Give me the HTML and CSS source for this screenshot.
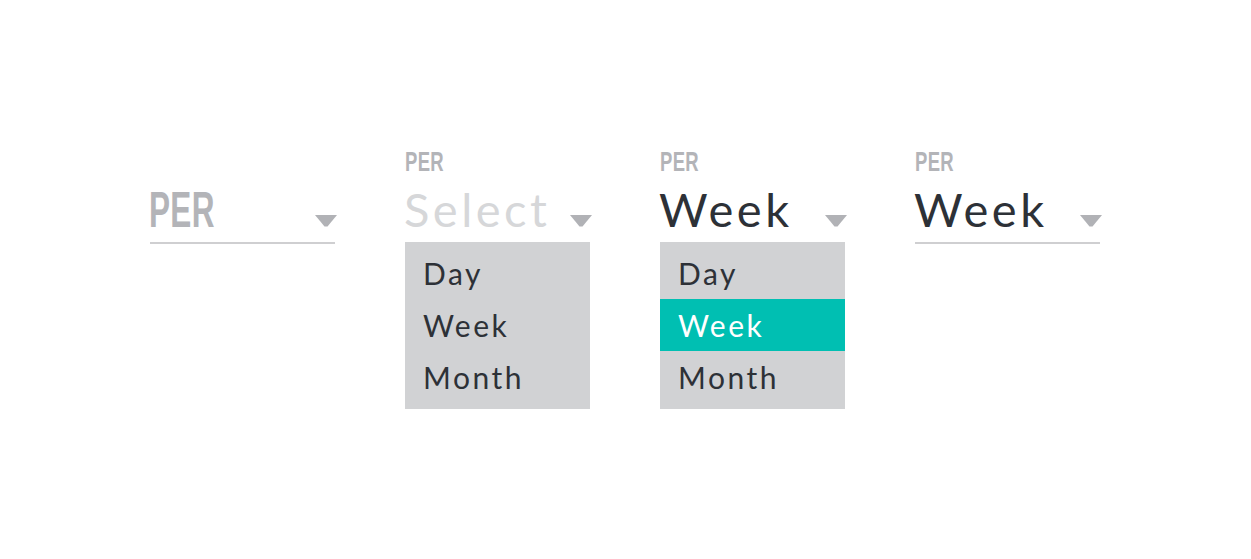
FILE: index.html
```html
<!DOCTYPE html>
<html lang="en">
<head>
    <meta charset="UTF-8">
    <title>Per selects</title>
    <link rel="stylesheet" href="styles.css">
</head>
<body>

<div class="row">
    <!-- Empty state -->
    <div class="picker">
        <div class="label label-empty">PER</div>
        <div class="field">
            <span class="tag">PER</span>
            <svg class="arrow" width="22" height="12" viewBox="0 0 22 12"><polygon points="0,0 22,0 12.5,11.5 9.5,11.5"/></svg>
        </div>
    </div>

    <!-- Open, nothing picked -->
    <div class="picker open">
        <div class="label"><span class="tag">PER</span></div>
        <div class="field">
            <span class="value placeholder">Select</span>
            <svg class="arrow" width="22" height="12" viewBox="0 0 22 12"><polygon points="0,0 22,0 12.5,11.5 9.5,11.5"/></svg>
        </div>
        <ul class="menu">
            <li>Day</li>
            <li>Week</li>
            <li>Month</li>
        </ul>
    </div>

    <!-- Open, week picked -->
    <div class="picker open">
        <div class="label"><span class="tag">PER</span></div>
        <div class="field">
            <span class="value">Week</span>
            <svg class="arrow" width="22" height="12" viewBox="0 0 22 12"><polygon points="0,0 22,0 12.5,11.5 9.5,11.5"/></svg>
        </div>
        <ul class="menu">
            <li>Day</li>
            <li class="active">Week</li>
            <li>Month</li>
        </ul>
    </div>

    <!-- Closed, week picked -->
    <div class="picker">
        <div class="label"><span class="tag">PER</span></div>
        <div class="field">
            <span class="value">Week</span>
            <svg class="arrow" width="22" height="12" viewBox="0 0 22 12"><polygon points="0,0 22,0 12.5,11.5 9.5,11.5"/></svg>
        </div>
    </div>
</div>

</body>
</html>
```

FILE: styles.css
```css
/* General */
body {
    margin: 0;
    background: #fff;
    font-family: Lato, "Open Sans", sans-serif;
    color: #2d3137;
}

.row {
    display: flex;
    gap: 70px;
    padding: 145px 0 0 150px;
}

.picker {
    width: 185px;
}

/* Small PER label above the field */
.label {
    height: 32px;
    font-size: 28px;
    line-height: 31px;
}

.label-empty {
    visibility: hidden;
}

.tag {
    display: inline-block;
    font-family: "Liberation Sans", Arial, sans-serif;
    font-weight: bold;
    color: #b3b4b8;
    transform: scaleX(0.66);
    transform-origin: left center;
    letter-spacing: 0.5px;
}

.field .tag {
    font-size: 50px;
    transform: scaleX(0.63);
    margin-left: -1px;
}

/* Field with underline */
.field {
    display: flex;
    justify-content: space-between;
    align-items: baseline;
    height: 61px;
    padding-top: 4px;
    border-bottom: 2px solid #cfcfd1;
}

.value {
    font-size: 47px;
    line-height: 56px;
    letter-spacing: 3.5px;
    margin-left: -1px;
}

.placeholder {
    color: #d6d7d9;
}

.arrow {
    fill: #b1b2b6;
    margin-right: -2px;
    margin-bottom: 1px;
}

.open .field {
    border-bottom-color: transparent;
}

/* Dropdown list */
.menu {
    list-style: none;
    margin: -2px 0 0;
    padding: 5px 0 6px;
    background: #d1d2d4;
}

.menu li {
    height: 52px;
    padding-left: 18px;
    font-size: 30px;
    line-height: 52px;
    letter-spacing: 2.5px;
}

.menu li.active {
    background: #00bfb2;
    color: #fff;
}
```
